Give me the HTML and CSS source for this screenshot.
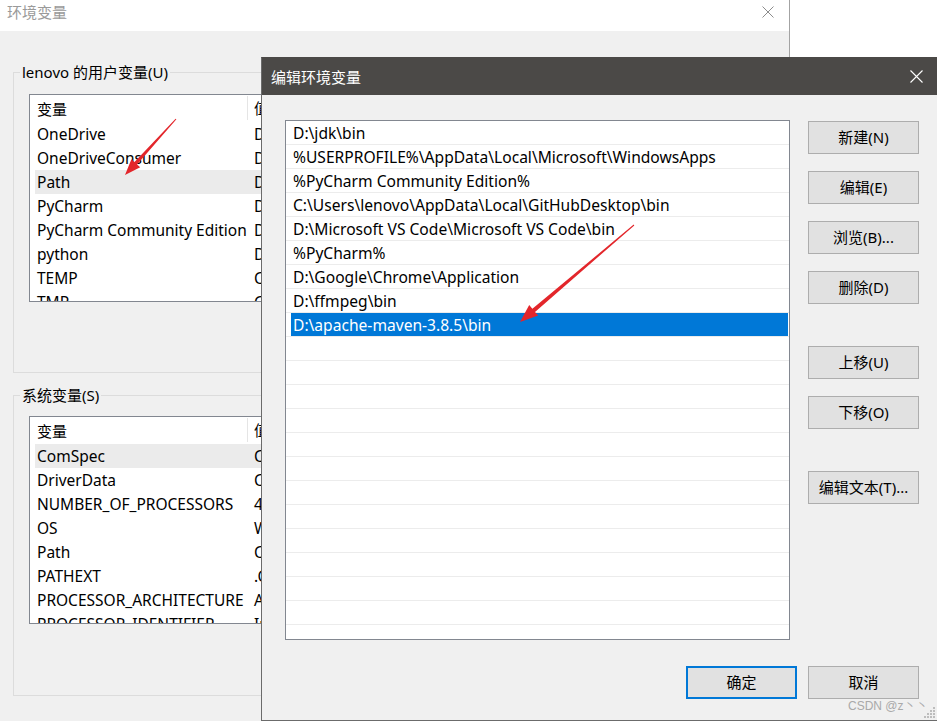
FILE: index.html
```html
<!DOCTYPE html>
<html lang="zh-CN">
<head>
<meta charset="utf-8">
<title>编辑环境变量</title>
<link rel="stylesheet" href="styles.css">
</head>
<body>
<div class="desktop">
  <section class="env-window">
    <header class="env-title">
      <span class="env-title-text">环境变量</span>
      <svg class="env-close" width="12" height="12" viewBox="0 0 12 12"><path d="M0.5 0.5 L11.5 11.5 M11.5 0.5 L0.5 11.5" stroke="#8c8c8c" stroke-width="1" fill="none"/></svg>
    </header>
    <div class="env-body">
      <div class="group">
        <span class="group-label">lenovo 的用户变量(U)</span>
        <div class="varlist">
          <div class="var-head"><span class="c1">变量</span><span class="c2">值</span></div>
          <div class="var-row"><span class="c1">OneDrive</span><span class="c2">D:\OneDrive</span></div>
          <div class="var-row"><span class="c1">OneDriveConsumer</span><span class="c2">D:\OneDrive</span></div>
          <div class="var-row is-hot"><span class="c1">Path</span><span class="c2">D:\jdk\bin</span></div>
          <div class="var-row"><span class="c1">PyCharm</span><span class="c2">D:\PyCharm\bin</span></div>
          <div class="var-row"><span class="c1">PyCharm Community Edition</span><span class="c2">D:\PyCharm Community Edition\bin</span></div>
          <div class="var-row"><span class="c1">python</span><span class="c2">D:\python</span></div>
          <div class="var-row"><span class="c1">TEMP</span><span class="c2">C:\Users\lenovo\AppData\Local\Temp</span></div>
          <div class="var-row"><span class="c1">TMP</span><span class="c2">C:\Users\lenovo\AppData\Local\Temp</span></div>
        </div>
      </div>
      <div class="group group-sys">
        <span class="group-label">系统变量(S)</span>
        <div class="varlist varlist-sys">
          <div class="var-head"><span class="c1">变量</span><span class="c2">值</span></div>
          <div class="var-row is-hot"><span class="c1">ComSpec</span><span class="c2">C:\Windows\system32\cmd.exe</span></div>
          <div class="var-row"><span class="c1">DriverData</span><span class="c2">C:\Windows\System32\Drivers\DriverData</span></div>
          <div class="var-row"><span class="c1">NUMBER_OF_PROCESSORS</span><span class="c2">4</span></div>
          <div class="var-row"><span class="c1">OS</span><span class="c2">Windows_NT</span></div>
          <div class="var-row"><span class="c1">Path</span><span class="c2">C:\Windows\system32</span></div>
          <div class="var-row"><span class="c1">PATHEXT</span><span class="c2">.COM;.EXE;.BAT;.CMD</span></div>
          <div class="var-row"><span class="c1">PROCESSOR_ARCHITECTURE</span><span class="c2">AMD64</span></div>
          <div class="var-row"><span class="c1">PROCESSOR_IDENTIFIER</span><span class="c2">Intel64 Family 6</span></div>
        </div>
      </div>
    </div>
  </section>

  <section class="edit-dialog">
    <header class="dlg-title">
      <span class="dlg-title-text">编辑环境变量</span>
      <svg class="dlg-close" width="13" height="13" viewBox="0 0 13 13"><path d="M0.5 0.5 L12.5 12.5 M12.5 0.5 L0.5 12.5" stroke="#ffffff" stroke-width="1.1" fill="none"/></svg>
    </header>
    <div class="dlg-body">
      <div class="dlg-main">
        <div class="pathlist">
          <div class="path-row"><span class="path-cell">D:\jdk\bin</span></div>
          <div class="path-row"><span class="path-cell">%USERPROFILE%\AppData\Local\Microsoft\WindowsApps</span></div>
          <div class="path-row"><span class="path-cell">%PyCharm Community Edition%</span></div>
          <div class="path-row"><span class="path-cell">C:\Users\lenovo\AppData\Local\GitHubDesktop\bin</span></div>
          <div class="path-row"><span class="path-cell">D:\Microsoft VS Code\Microsoft VS Code\bin</span></div>
          <div class="path-row"><span class="path-cell">%PyCharm%</span></div>
          <div class="path-row"><span class="path-cell">D:\Google\Chrome\Application</span></div>
          <div class="path-row"><span class="path-cell">D:\ffmpeg\bin</span></div>
          <div class="path-row is-selected"><span class="path-cell">D:\apache-maven-3.8.5\bin</span></div>
          <div class="path-row"><span class="path-cell"></span></div>
          <div class="path-row"><span class="path-cell"></span></div>
          <div class="path-row"><span class="path-cell"></span></div>
          <div class="path-row"><span class="path-cell"></span></div>
          <div class="path-row"><span class="path-cell"></span></div>
          <div class="path-row"><span class="path-cell"></span></div>
          <div class="path-row"><span class="path-cell"></span></div>
          <div class="path-row"><span class="path-cell"></span></div>
          <div class="path-row"><span class="path-cell"></span></div>
          <div class="path-row"><span class="path-cell"></span></div>
          <div class="path-row"><span class="path-cell"></span></div>
          <div class="path-row"><span class="path-cell"></span></div>
          <div class="path-row"><span class="path-cell"></span></div>
        </div>
        <div class="side-buttons">
          <button class="btn">新建(N)</button>
          <button class="btn">编辑(E)</button>
          <button class="btn">浏览(B)...</button>
          <button class="btn">删除(D)</button>
          <button class="btn btn-sep">上移(U)</button>
          <button class="btn">下移(O)</button>
          <button class="btn btn-sep">编辑文本(T)...</button>
        </div>
      </div>
      <div class="dlg-footer">
        <button class="btn btn-primary">确定</button>
        <button class="btn">取消</button>
      </div>
    </div>
    <span class="watermark">CSDN @z丶丶</span>
    <svg class="grip" width="12" height="12" viewBox="0 0 12 12">
      <rect x="9" y="0" width="2" height="2" fill="#bdbdbd"/>
      <rect x="6" y="3" width="2" height="2" fill="#bdbdbd"/>
      <rect x="9" y="3" width="2" height="2" fill="#bdbdbd"/>
      <rect x="3" y="6" width="2" height="2" fill="#bdbdbd"/>
      <rect x="6" y="6" width="2" height="2" fill="#bdbdbd"/>
      <rect x="9" y="6" width="2" height="2" fill="#bdbdbd"/>
      <rect x="0" y="9" width="2" height="2" fill="#bdbdbd"/>
      <rect x="3" y="9" width="2" height="2" fill="#bdbdbd"/>
      <rect x="6" y="9" width="2" height="2" fill="#bdbdbd"/>
      <rect x="9" y="9" width="2" height="2" fill="#bdbdbd"/>
    </svg>
  </section>

  <svg class="arrows" width="937" height="721" viewBox="0 0 937 721">
    <polygon fill="#e3262b" points="176.4,119.3 137.1,164.4 140.2,167.2 125,175 131.4,159.2 134.5,162.0 175.6,118.7"/>
    <polygon fill="#e3262b" points="634.3,225.4 535.0,311.9 538.2,315.6 520,322 529.2,305.0 532.4,308.8 633.7,224.6"/>
  </svg>
</div>
</body>
</html>
```

FILE: styles.css
```css
* { box-sizing: border-box; }

html, body {
  margin: 0;
  padding: 0;
}

body {
  width: 937px;
  height: 721px;
  overflow: hidden;
  background: #ffffff;
  font-family: "Noto Sans", "Noto Sans CJK SC", sans-serif;
  font-size: 15px;
  color: #000;
}

.desktop {
  position: relative;
  width: 937px;
  height: 721px;
  overflow: hidden;
}

/* ---------- background window: 环境变量 ---------- */
.env-window {
  position: absolute;
  left: 0;
  top: 0;
  width: 790px;
  height: 721px;
  border-right: 1px solid #a3a3a3;
  background: #f0f0f0;
  display: flex;
  flex-direction: column;
}

.env-title {
  flex: none;
  height: 31px;
  background: #ffffff;
  display: flex;
  justify-content: space-between;
  align-items: flex-start;
  padding: 0 15px 0 7px;
}

.env-title-text {
  line-height: 24px;
  color: #9a9a9a;
}

.env-close {
  margin-top: 6px;
}

.env-body {
  padding: 41px 0 0 13px;
}

.group {
  width: 761px;
  height: 301px;
  border: 1px solid #dcdcdc;
}

.group-sys {
  margin-top: 22px;
}

.group-label {
  display: block;
  width: max-content;
  margin: -11px 0 0 6px;
  padding: 0 2px;
  line-height: 20px;
  background: #f0f0f0;
}

.varlist {
  width: 711px;
  height: 208px;
  margin: 12px 0 0 15px;
  border: 1px solid #828790;
  background: #ffffff;
  overflow: hidden;
  font-size: 15.5px;
}

.varlist-sys {
  margin-top: 11px;
}

.var-head,
.var-row {
  display: grid;
  grid-template-columns: 212px 1fr;
  margin-left: 5px;
  white-space: nowrap;
}

.var-head {
  height: 27px;
  line-height: 28px;
  font-size: 15px;
}

.var-head .c2 {
  border-left: 1px solid #e5e5e5;
  margin: 1px 0 2px;
  line-height: 24px;
  padding-left: 6px;
}

.var-row {
  height: 24px;
  line-height: 24px;
}

.var-row.is-hot {
  background: #ebebeb;
}

.c1 {
  padding-left: 2px;
  overflow: hidden;
}

.var-row .c2 {
  padding-left: 7px;
}

/* ---------- front dialog: 编辑环境变量 ---------- */
.edit-dialog {
  position: absolute;
  left: 261px;
  top: 57px;
  width: 678px;
  height: 664px;
  border: 1px solid #6b6b6b;
  border-top-color: #4b4947;
  background: #f0f0f0;
  display: flex;
  flex-direction: column;
  z-index: 2;
}

.dlg-title {
  flex: none;
  height: 37px;
  background: #4b4947;
  color: #ffffff;
  display: flex;
  justify-content: space-between;
  align-items: center;
  padding: 0 15px 0 9px;
}

.dlg-title-text {
  line-height: 20px;
}

.dlg-body {
  flex: 1;
  display: flex;
  flex-direction: column;
}

.dlg-main {
  display: flex;
  padding: 25px 19px 0 23px;
  gap: 18px;
}

.pathlist {
  flex: none;
  width: 505px;
  height: 520px;
  border: 1px solid #828790;
  background: #ffffff;
  overflow: hidden;
  font-size: 15.6px;
}

.path-row {
  height: 24px;
  border-bottom: 1px solid #ececec;
  padding: 0 1px 0 5px;
}

.path-cell {
  display: block;
  height: 23px;
  line-height: 21px;
  padding: 2px 0 0 2px;
  white-space: nowrap;
}

.path-row.is-selected .path-cell {
  background: #0078d7;
  color: #ffffff;
}

.side-buttons {
  flex: none;
  width: 111px;
  display: flex;
  flex-direction: column;
  padding-top: 1px;
}

.btn {
  width: 111px;
  height: 33px;
  border: 1px solid #adadad;
  background: #e1e1e1;
  font: inherit;
  color: #000;
  padding: 0;
  line-height: 29px;
  text-align: center;
}

.side-buttons .btn + .btn {
  margin-top: 17px;
}

.side-buttons .btn.btn-sep {
  margin-top: 42px;
}

.btn-primary {
  border: 2px solid #0078d7;
}

.dlg-footer {
  display: flex;
  justify-content: flex-end;
  gap: 11px;
  padding: 26px 19px 0 0;
}

.watermark {
  position: absolute;
  left: 586px;
  top: 641px;
  font-family: "Liberation Sans", sans-serif;
  font-size: 12px;
  line-height: 14px;
  color: #a9a9a9;
  white-space: nowrap;
}

.grip {
  position: absolute;
  left: 662px;
  top: 649px;
}

.arrows {
  position: absolute;
  left: 0;
  top: 0;
  z-index: 5;
  pointer-events: none;
}
```
